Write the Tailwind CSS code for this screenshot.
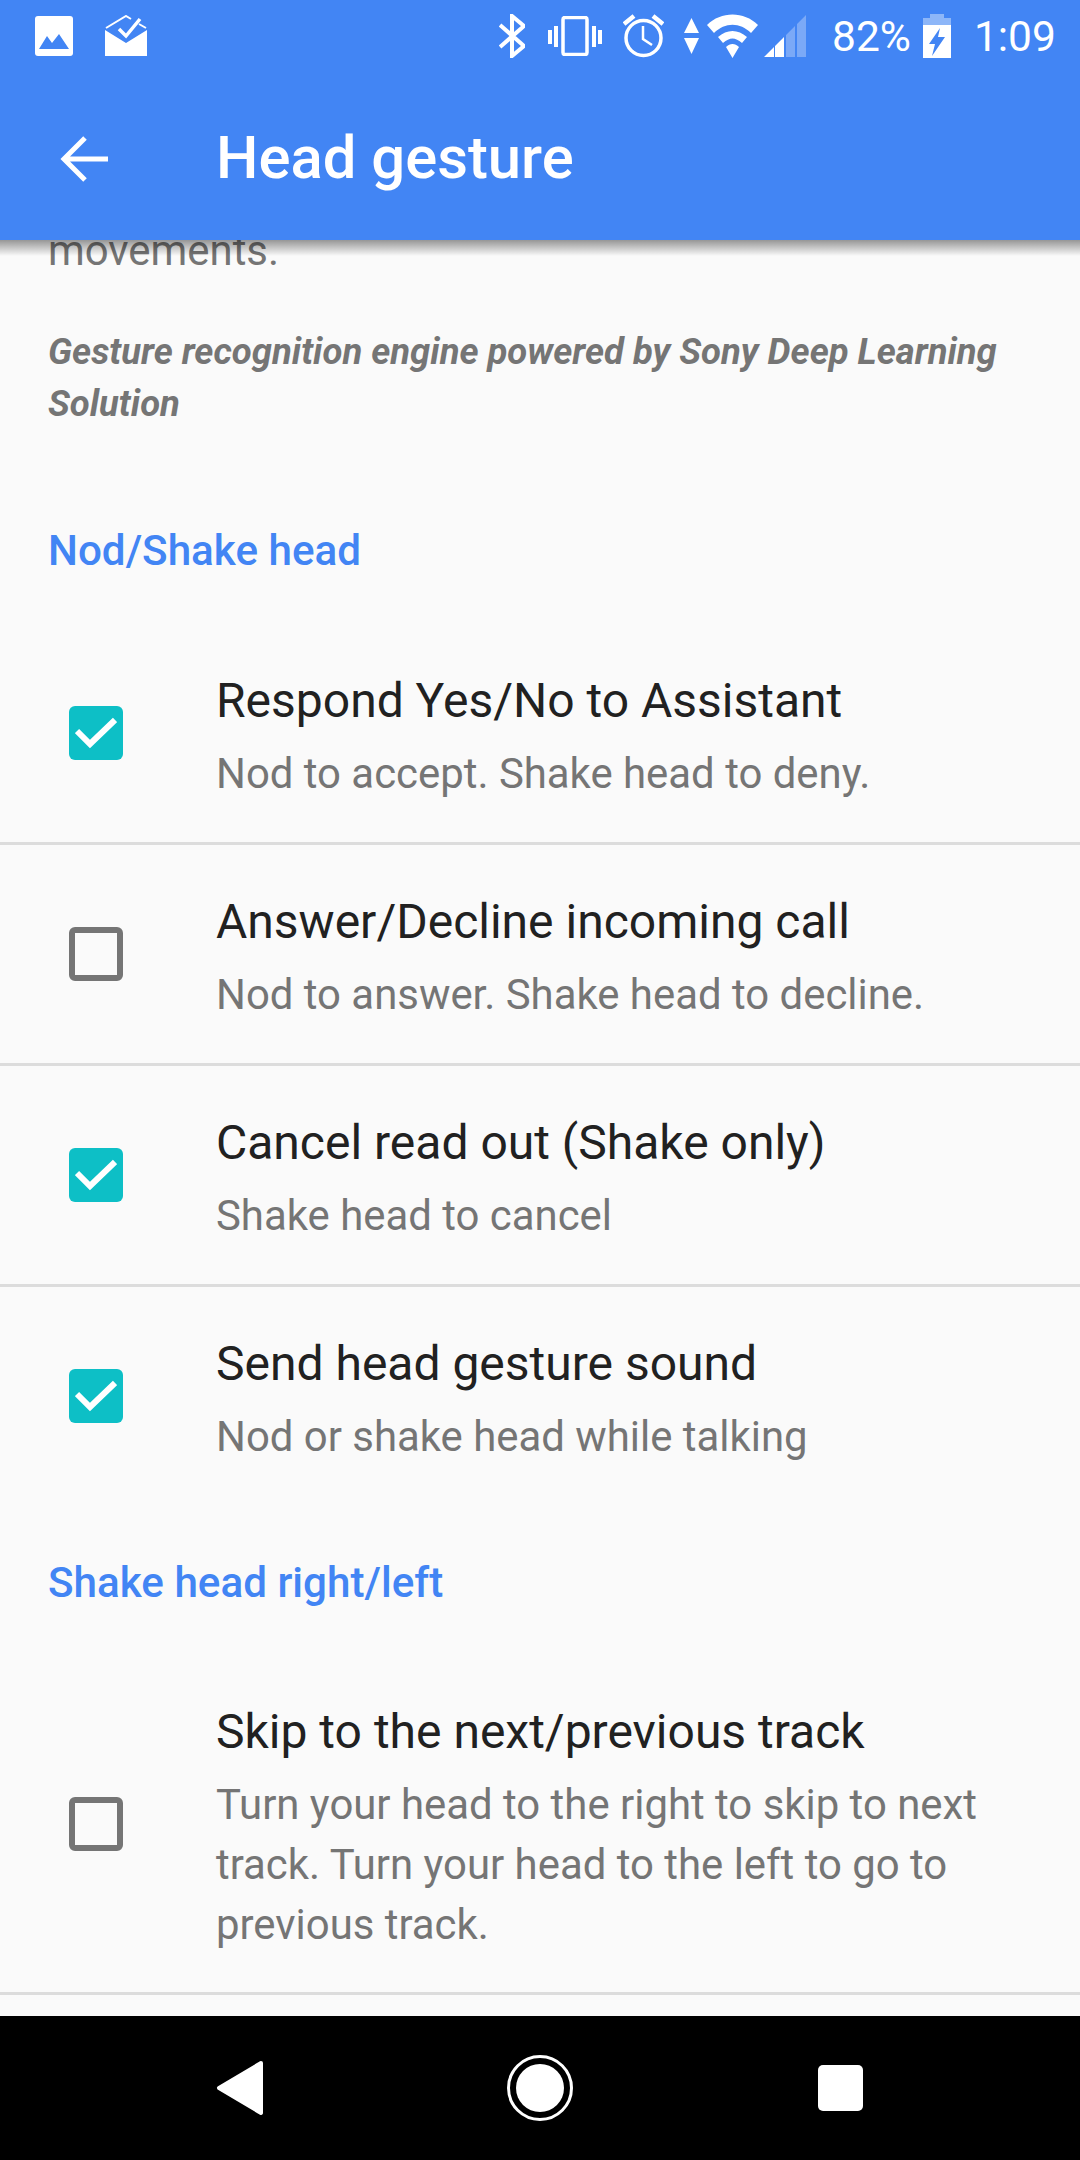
<!DOCTYPE html>
<html lang="en">
<head>
  <meta charset="UTF-8" />
  <meta name="viewport" content="width=device-width, initial-scale=1" />
  <title>Head gesture</title>
  <script src="https://cdn.jsdelivr.net/npm/@tailwindcss/browser@4"></script>
</head>
<body class="bg-[#fafafa] font-['Roboto',sans-serif]">
  <div class="flex flex-col w-[1080px] h-[2160px] overflow-hidden">
    <!-- status bar + toolbar -->
    <header class="relative z-10 h-[240px] shrink-0 bg-[#4285f4] text-white">
      <div class="flex items-center h-[72px] pl-[35px]">
        <svg class="w-[38px] h-[40px]" viewBox="0 0 38 40"><rect width="38" height="40" rx="3" fill="#fff"/><path d="M4 33 L12 20 L17 27 L24 18 L34 33 Z" fill="#4285f4"/></svg>
        <svg class="ml-[32px] w-[42px] h-[42px]" viewBox="0 0 42 42"><path d="M0 15 L21 28 L42 15 V41 H0 Z" fill="#fff"/><path d="M1 13 L21 1 L26 4 M34 9 L41 13" fill="none" stroke="#fff" stroke-width="2"/><path d="M14 14 L21 21 L35 4" fill="none" stroke="#fff" stroke-width="3.5"/></svg>
        <svg class="ml-[352px] w-[26px] h-[44px]" viewBox="0 0 26 44"><path d="M1 11 L25 32 L13 42 V2 L25 12 L1 33" fill="none" stroke="#fff" stroke-width="4"/></svg>
        <svg class="ml-[23px] w-[54px] h-[40px]" viewBox="0 0 54 40"><rect x="15" y="1.5" width="24" height="37" rx="2" fill="none" stroke="#fff" stroke-width="3.5"/><path d="M0 14h4v14H0zM6 10h4v21H6zM44 10h4v21h-4zM50 14h4v14h-4z" fill="#fff"/></svg>
        <svg class="ml-[21px] w-[41px] h-[44px]" viewBox="0 0 41 44"><circle cx="20.500" cy="24" r="17.500" fill="none" stroke="#fff" stroke-width="3.500"/><path d="M20 12 V25 L29 31" fill="none" stroke="#fff" stroke-width="2.500"/><path d="M1 10 L11 2 M40 10 L30 2" fill="none" stroke="#fff" stroke-width="4.500"/></svg>
        <svg class="ml-[20px] w-[15px] h-[36px]" viewBox="0 0 15 36"><path d="M7.500 0 L15 15 H0 Z M0 20 H15 L7.500 36 Z" fill="#fff"/></svg>
        <svg class="ml-[8px] w-[51px] h-[44px]" viewBox="0 0 51 44"><path d="M0 11 C14 -3 37 -3 51 11 L44 19 C33 8 18 8 7 19 Z M11 23 C20 15 31 15 40 23 L35 29 C28 23 23 23 16 29 Z M19 33 C23 29 28 29 32 33 L25.500 44 Z" fill="#fff"/></svg>
        <svg class="ml-[6px] w-[42px] h-[42px]" viewBox="0 0 42 42"><path d="M0 42 L10 32 V42 Z M11 31 L20 22 V42 H11 Z" fill="#fff"/><path d="M22 20 L31 11 V42 H22 Z M33 9 L42 0 V42 H33 Z" fill="#fff" fill-opacity=".3"/></svg>
        <span class="ml-[26px] mt-[2px] text-[42.5px] leading-none">82%</span>
        <svg class="ml-[12px] w-[28px] h-[44px]" viewBox="0 0 28 44"><path d="M7 0 H21 V4 H28 V11 H0 V4 H7 Z" fill="#fff" fill-opacity=".4"/><path d="M0 11 H28 V44 H0 Z M17 14 L6 30 H12 L9 42 L22 23 H15 Z" fill="#fff" fill-rule="evenodd"/></svg>
        <span class="ml-[23px] mt-[2px] text-[42.5px] leading-none">1:09</span>
      </div>
      <div class="flex items-center h-[168px] pt-[6px]">
        <svg class="ml-[60px] w-[48px] h-[48px]" viewBox="0 0 48 48"><path d="M48 24 H4 M25 3 L4 24 L25 45" fill="none" stroke="#fff" stroke-width="5"/></svg>
        <h1 class="ml-[108px] text-[59.8px] font-medium leading-none">Head gesture</h1>
      </div>
      <div class="absolute top-full left-0 right-0 h-[16px] bg-linear-to-b from-black/40 to-transparent"></div>
    </header>

    <!-- settings list -->
    <main class="flex-1 overflow-hidden text-[#212121]">
      <p class="-mt-[19px] px-[48px] text-[41.9px] leading-[60px] text-[#757575]">movements.</p>
      <p class="mt-[45px] px-[48px] text-[36.45px] leading-[52px] font-bold italic text-[#757575]">Gesture recognition engine powered by Sony Deep Learning Solution</p>

      <h2 class="mt-[91px] px-[48px] text-[42.2px] leading-[60px] font-medium text-[#4285f4]">Nod/Shake head</h2>

      <div class="mt-[43px] flex items-center h-[221px] border-b-[3px] border-[#dcdcdc]">
        <span class="ml-[69px] flex items-center justify-center w-[54px] h-[54px] rounded-[6px] bg-[#0dbfc6]">
          <svg class="w-[42px] h-[32px]" viewBox="0 0 42 32"><path d="M2 14 L15 27 L40 3" fill="none" stroke="#fff" stroke-width="6"/></svg>
        </span>
        <div class="ml-[93px] mt-[7px]">
          <p class="text-[48px] leading-[64px]">Respond Yes/No to Assistant</p>
          <p class="mt-[11px] text-[41.9px] leading-[60px] text-[#757575]">Nod to accept. Shake head to deny.</p>
        </div>
      </div>
      <div class="flex items-center h-[221px] border-b-[3px] border-[#dcdcdc]">
        <span class="ml-[69px] w-[54px] h-[54px] rounded-[6px] border-[6px] border-[#757575]"></span>
        <div class="ml-[93px] mt-[7px]">
          <p class="text-[48px] leading-[64px]">Answer/Decline incoming call</p>
          <p class="mt-[11px] text-[41.9px] leading-[60px] text-[#757575]">Nod to answer. Shake head to decline.</p>
        </div>
      </div>
      <div class="flex items-center h-[221px] border-b-[3px] border-[#dcdcdc]">
        <span class="ml-[69px] flex items-center justify-center w-[54px] h-[54px] rounded-[6px] bg-[#0dbfc6]">
          <svg class="w-[42px] h-[32px]" viewBox="0 0 42 32"><path d="M2 14 L15 27 L40 3" fill="none" stroke="#fff" stroke-width="6"/></svg>
        </span>
        <div class="ml-[93px] mt-[7px]">
          <p class="text-[48px] leading-[64px]">Cancel read out (Shake only)</p>
          <p class="mt-[11px] text-[41.9px] leading-[60px] text-[#757575]">Shake head to cancel</p>
        </div>
      </div>
      <div class="flex items-center h-[221px] border-b-[3px] border-transparent">
        <span class="ml-[69px] flex items-center justify-center w-[54px] h-[54px] rounded-[6px] bg-[#0dbfc6]">
          <svg class="w-[42px] h-[32px]" viewBox="0 0 42 32"><path d="M2 14 L15 27 L40 3" fill="none" stroke="#fff" stroke-width="6"/></svg>
        </span>
        <div class="ml-[93px] mt-[7px]">
          <p class="text-[48px] leading-[64px]">Send head gesture sound</p>
          <p class="mt-[11px] text-[41.9px] leading-[60px] text-[#757575]">Nod or shake head while talking</p>
        </div>
      </div>

      <h2 class="mt-[45px] px-[48px] text-[42.2px] leading-[60px] font-medium text-[#4285f4]">Shake head right/left</h2>

      <div class="mt-[42px] flex items-center h-[340px] border-b-[3px] border-[#dcdcdc]">
        <span class="ml-[69px] shrink-0 w-[54px] h-[54px] rounded-[6px] border-[6px] border-[#757575]"></span>
        <div class="ml-[93px] pr-[80px] mt-[7px]">
          <p class="text-[48px] leading-[64px]">Skip to the next/previous track</p>
          <p class="mt-[11px] text-[41.9px] leading-[60px] text-[#757575]">Turn your head to the right to skip to next track. Turn your head to the left to go to previous track.</p>
        </div>
      </div>
    </main>

    <!-- navigation bar -->
    <nav class="relative z-10 h-[144px] shrink-0 bg-black">
      <div class="flex items-center h-full">
        <svg class="ml-[216px] w-[49px] h-[56px]" viewBox="0 0 49 56"><path d="M45 3 L3 28 L45 53 Z" fill="#fff" stroke="#fff" stroke-width="4" stroke-linejoin="round"/></svg>
        <svg class="ml-[242px] w-[66px] h-[66px]" viewBox="0 0 66 66"><circle cx="33" cy="33" r="31.500" fill="none" stroke="#fff" stroke-width="3"/><circle cx="33" cy="33" r="24" fill="#fff"/></svg>
        <span class="ml-[245px] w-[45px] h-[46px] rounded-[5px] bg-white"></span>
      </div>
    </nav>
  </div>
</body>
</html>
